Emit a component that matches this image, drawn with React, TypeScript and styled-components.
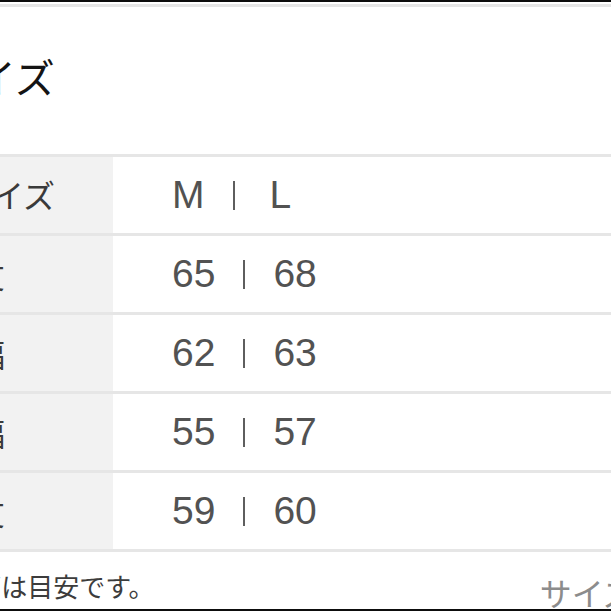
import React from 'react';
import styled, { createGlobalStyle } from 'styled-components';

const GlobalStyle = createGlobalStyle`
  html, body {
    margin: 0;
    padding: 0;
    background: #ffffff;
  }
  body {
    font-family: "Liberation Sans", "Noto Sans CJK JP", sans-serif;
  }
`;

const Viewport = styled.div`
  width: 611px;
  height: 611px;
  overflow: hidden;
  display: flex;
  flex-direction: column;
  background: #ffffff;
`;

const Sheet = styled.div`
  flex: 1;
  display: flex;
  flex-direction: column;
  margin-left: -100px;
  width: 811px;
`;

const EdgeLine = styled.div`
  height: 2px;
  flex-shrink: 0;
  background: #0d0d0d;
`;

const Header = styled.div`
  margin-top: 2px;
  border-top: 3px solid #e6e6e6;
  padding: 49px 0 58px 36px;
`;

const Title = styled.h1`
  margin: 0;
  font-family: "Noto Sans CJK JP", sans-serif;
  font-weight: 400;
  font-size: 40px;
  line-height: 40px;
  color: #141414;
`;

const Table = styled.div`
  display: flex;
  flex-direction: column;
  border-bottom: 3px solid #e6e6e6;
`;

const Row = styled.div`
  display: grid;
  grid-template-columns: 213px 1fr;
  height: 76px;
  border-top: 3px solid #e6e6e6;
`;

const Label = styled.div<{ $head?: boolean }>`
  display: flex;
  align-items: center;
  padding-left: ${(p) => (p.$head ? '60px' : '41px')};
  padding-bottom: ${(p) => (p.$head ? '3px' : '0')};
  background: #f2f2f2;
  font-family: "Noto Sans CJK JP", sans-serif;
  font-size: 32px;
  color: #3a3a3a;
  white-space: nowrap;
`;

const Values = styled.div`
  display: flex;
  align-items: center;
  padding-left: 59px;
  font-size: 39px;
  color: #525252;
`;

const Divider = styled.span<{ $head?: boolean }>`
  display: inline-block;
  width: 2px;
  height: 29px;
  margin: 0 ${(p) => (p.$head ? '35px' : '28px')} 0 28px;
  background: #5e5e5e;
`;

const Footer = styled.div`
  flex: 1;
  display: flex;
  align-items: flex-start;
  padding: 20px 0 0 24px;
  font-family: "Noto Sans CJK JP", sans-serif;
  white-space: nowrap;
`;

const Note = styled.span`
  font-size: 26px;
  line-height: 28px;
  color: #3c3c3c;
`;

const GuideLink = styled.span`
  margin-left: 385px;
  margin-top: 3px;
  font-size: 32px;
  line-height: 34px;
  color: #8c8c8c;
`;

type SizeRow = {
  label: string;
  m: string;
  l: string;
};

const rows: SizeRow[] = [
  { label: '着丈', m: '65', l: '68' },
  { label: '身幅', m: '62', l: '63' },
  { label: '肩幅', m: '55', l: '57' },
  { label: '袖丈', m: '59', l: '60' },
];

const App = () => {
  return (
    <>
      <GlobalStyle />
      <Viewport>
        <EdgeLine />
        <Sheet>
          <Header>
            <Title>サイズ</Title>
          </Header>
          <Table>
            <Row>
              <Label $head>サイズ</Label>
              <Values>
                <span>M</span>
                <Divider $head />
                <span>L</span>
              </Values>
            </Row>
            {rows.map((_row) => (
              <Row key={_row.label}>
                <Label>{_row.label}</Label>
                <Values>
                  <span>{_row.m}</span>
                  <Divider />
                  <span>{_row.l}</span>
                </Values>
              </Row>
            ))}
          </Table>
          <Footer>
            <Note>サイズは目安です。</Note>
            <GuideLink>サイズガイド</GuideLink>
          </Footer>
        </Sheet>
        <EdgeLine />
      </Viewport>
    </>
  );
};

export default App;
